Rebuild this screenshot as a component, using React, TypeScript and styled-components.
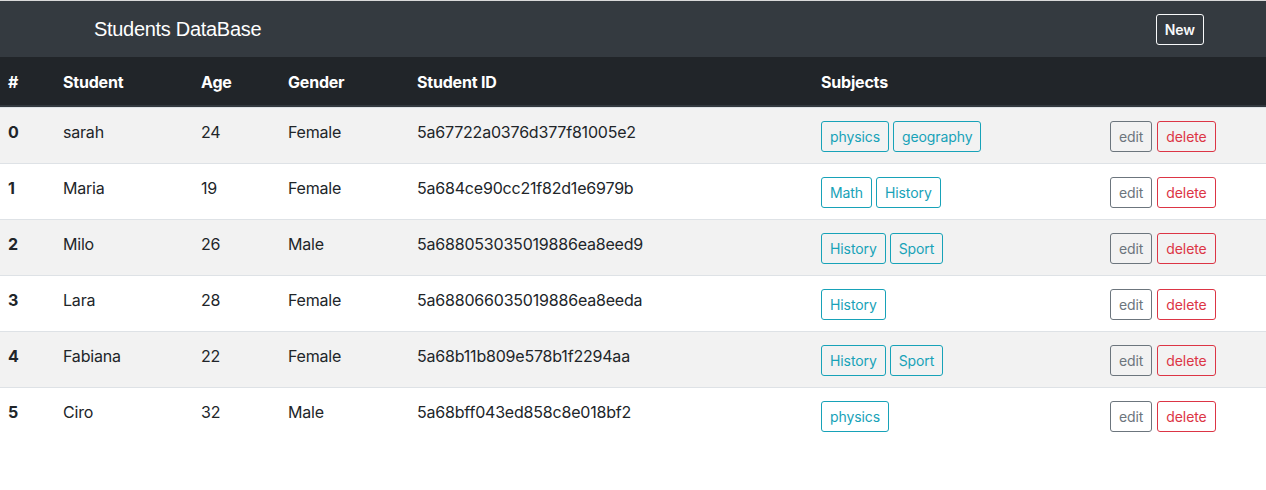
import React from "react";
import styled, { createGlobalStyle } from "styled-components";

const GlobalStyle = createGlobalStyle`
  html, body { margin: 0; padding: 0; background: #fff; }
  body {
    font-family: Inter, "Liberation Sans", Arial, sans-serif;
    font-size: 16px;
    line-height: 1.5;
    color: #212529;
    letter-spacing: -0.2px;
  }
  * { box-sizing: border-box; }
`;

const Page = styled.div`
  border-top: 1px solid #d9d9d9;
`;

const NavBar = styled.nav`
  display: flex;
  align-items: center;
  justify-content: space-between;
  height: 56px;
  background: #343a40;
  padding: 0 62px 0 94px;
`;

const Brand = styled.span`
  font-family: "Liberation Sans", Arial, sans-serif;
  font-size: 20px;
  line-height: 30px;
  color: #fff;
  letter-spacing: -0.3px;
`;

const Btn = styled.button<{ $tone: string }>`
  display: inline-block;
  font-family: inherit;
  font-size: 14px;
  line-height: 21px;
  letter-spacing: -0.1px;
  padding: 4px 8px;
  border: 1px solid ${(p) => p.$tone};
  color: ${(p) => p.$tone};
  background: transparent;
  border-radius: 3px;
  cursor: pointer;
`;

const NewBtn = styled(Btn)`
  font-weight: 600;
  padding: 4px 8px;
`;

const Table = styled.table`
  width: 100%;
  border-collapse: separate;
  border-spacing: 0;
  table-layout: fixed;
`;

const HeadCell = styled.th`
  background: #212529;
  color: #fff;
  font-weight: 700;
  text-align: left;
  padding: 13px 8px 11px;
  line-height: 24px;
  border-bottom: 2px solid #32383e;
`;

const Row = styled.tr<{ $odd: boolean }>`
  background: ${(p) => (p.$odd ? "#f2f2f2" : "#fff")};
`;

const Cell = styled.td<{ $bold?: boolean }>`
  padding: 12px 8px;
  vertical-align: top;
  line-height: 24px;
  border-top: 1px solid #dee2e6;
  font-weight: ${(p) => (p.$bold ? 700 : 400)};
`;

const BtnGroup = styled.div`
  display: flex;
  gap: 4px;
  margin: 1px 0 -1px;
`;

const ActionGroup = styled.div`
  display: flex;
  gap: 5px;
  margin: 1px 0 -1px;
`;

const students = [
  { name: "sarah", age: 24, gender: "Female", id: "5a67722a0376d377f81005e2", subjects: ["physics", "geography"] },
  { name: "Maria", age: 19, gender: "Female", id: "5a684ce90cc21f82d1e6979b", subjects: ["Math", "History"] },
  { name: "Milo", age: 26, gender: "Male", id: "5a688053035019886ea8eed9", subjects: ["History", "Sport"] },
  { name: "Lara", age: 28, gender: "Female", id: "5a688066035019886ea8eeda", subjects: ["History"] },
  { name: "Fabiana", age: 22, gender: "Female", id: "5a68b11b809e578b1f2294aa", subjects: ["History", "Sport"] },
  { name: "Ciro", age: 32, gender: "Male", id: "5a68bff043ed858c8e018bf2", subjects: ["physics"] },
];

const widths = [55, 138, 87, 129, 404, 289, 164];

export default function App() {
  return (
    <Page>
      <GlobalStyle />
      <NavBar>
        <Brand>Students DataBase</Brand>
        <NewBtn $tone="#f8f9fa">New</NewBtn>
      </NavBar>
      <Table>
        <colgroup>
          {widths.map((w, i) => (
            <col key={i} style={{ width: w }} />
          ))}
        </colgroup>
        <thead>
          <tr>
            <HeadCell>#</HeadCell>
            <HeadCell>Student</HeadCell>
            <HeadCell>Age</HeadCell>
            <HeadCell>Gender</HeadCell>
            <HeadCell>Student ID</HeadCell>
            <HeadCell>Subjects</HeadCell>
            <HeadCell></HeadCell>
          </tr>
        </thead>
        <tbody>
          {students.map((s, i) => (
            <Row key={s.id} $odd={i % 2 === 0}>
              <Cell $bold>{i}</Cell>
              <Cell>{s.name}</Cell>
              <Cell>{s.age}</Cell>
              <Cell>{s.gender}</Cell>
              <Cell>{s.id}</Cell>
              <Cell>
                <BtnGroup>
                  {s.subjects.map((sub) => (
                    <Btn key={sub} $tone="#17a2b8">{sub}</Btn>
                  ))}
                </BtnGroup>
              </Cell>
              <Cell>
                <ActionGroup>
                  <Btn $tone="#6c757d">edit</Btn>
                  <Btn $tone="#dc3545">delete</Btn>
                </ActionGroup>
              </Cell>
            </Row>
          ))}
        </tbody>
      </Table>
    </Page>
  );
}
